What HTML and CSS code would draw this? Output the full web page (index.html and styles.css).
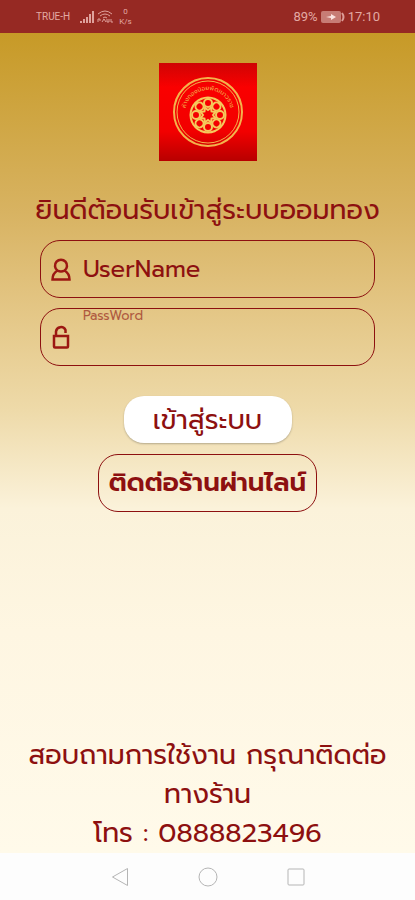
FILE: index.html
```
<!DOCTYPE html>
<html lang="th">
<head>
    <meta charset="UTF-8">
    <meta name="viewport" content="width=device-width, initial-scale=1">
    <title>ระบบออมทอง</title>
    <link rel="stylesheet" href="styles.css">
</head>
<body>

<header class="status-bar">
    <span class="carrier">TRUE-H</span>
    <svg class="signal" width="14" height="12" viewBox="0 0 14 12">
        <path d="M0 10h2v2H0zM3 8h2v4H3zM6 6h2v6H6zM9 3h2v9H9zM12 0h2v12h-2z"/>
    </svg>
    <svg class="wifi" width="16" height="13" viewBox="0 0 16 13">
        <path d="M1 4Q8-2 15 4M3 6Q8 2 13 6M6 8Q8 6 10 8M1 12V9h2v2M5 12l2-3 2 3M10 9v3h2V9M14 9v3h2" fill="none"/>
    </svg>
    <span class="speed">0<br>K/s</span>
    <span class="percent">89%</span>
    <svg class="battery" width="24" height="12" viewBox="0 0 24 12">
        <rect x="0" y="0" width="20" height="12" rx="2" fill="#c77c75"/>
        <path d="M21 2q3 4 0 8" fill="none" stroke="#dc9d98" stroke-width="2"/>
        <path d="M5 6l5-1V3l5 3-5 3V7z" fill="#fbe3e0"/>
    </svg>
    <span class="clock">17:10</span>
</header>

<main class="login">
    <svg class="logo" width="98" height="98" viewBox="0 0 98 98">
        <defs>
            <linearGradient id="red" x1="0" y1="0" x2="0" y2="1">
                <stop offset="0" stop-color="#cf0404"/>
                <stop offset=".25" stop-color="#fa0000"/>
                <stop offset=".7" stop-color="#f20000"/>
                <stop offset="1" stop-color="#b80000"/>
            </linearGradient>
            <path id="arc" d="M26 50a23 23 0 0 1 46 0"/>
            <g id="petal">
                <circle cx="49" cy="40" r="4"/>
                <path d="M42 36Q49 33 56 36M45 44l4 3 4-3"/>
            </g>
        </defs>
        <rect width="98" height="98" fill="url(#red)"/>
        <g fill="none" stroke="#f3b34c">
            <circle cx="49" cy="49" r="34" stroke-width="2"/>
            <circle cx="49" cy="49" r="31" stroke-width="1"/>
        </g>
        <text class="logo-text" text-anchor="middle"><textPath href="#arc" startOffset="50%">ห้างทองน้อยพัฒนาวราช</textPath></text>
        <g fill="none" stroke="#f5c95c" stroke-width="2">
            <use href="#petal"/>
            <use href="#petal" transform="rotate(45 49 52)"/>
            <use href="#petal" transform="rotate(90 49 52)"/>
            <use href="#petal" transform="rotate(135 49 52)"/>
            <use href="#petal" transform="rotate(180 49 52)"/>
            <use href="#petal" transform="rotate(225 49 52)"/>
            <use href="#petal" transform="rotate(270 49 52)"/>
            <use href="#petal" transform="rotate(315 49 52)"/>
        </g>
    </svg>

    <h1 class="welcome">ยินดีต้อนรับเข้าสู่ระบบออมทอง</h1>

    <form class="form">
        <div class="field">
            <svg class="icon" width="20" height="24" viewBox="0 0 20 24">
                <path d="M6.500 13.500a6 6 0 1 1 7 0M1.500 22.500q0-6 5-9 3.500 2 7 0 5 3 5 9z"/>
            </svg>
            <input type="text" id="username" placeholder="UserName" aria-label="UserName">
        </div>
        <div class="field">
            <svg class="icon" width="20" height="24" viewBox="0 0 20 24">
                <path d="M3 11h14v10.500q0 1-1 1H4q-1 0-1-1zM5 11V6.500a5 5 0 0 1 9.500-1.500v3"/>
            </svg>
            <label class="hint" for="password">PassWord</label>
            <input type="password" id="password">
        </div>
        <button class="submit" type="submit">เข้าสู่ระบบ</button>
    </form>
    <a class="line-link" href="#">ติดต่อร้านผ่านไลน์</a>

    <p class="contact">สอบถามการใช้งาน กรุณาติดต่อ<br>ทางร้าน<br>โทร : 0888823496</p>
</main>

<nav class="nav-bar">
    <button type="button" aria-label="Back">
        <svg width="18" height="20" viewBox="0 0 18 20"><path d="M16.500 1.500v17L1.500 10z"/></svg>
    </button>
    <button type="button" aria-label="Home">
        <svg width="20" height="20" viewBox="0 0 20 20"><circle cx="10" cy="10" r="9"/></svg>
    </button>
    <button type="button" aria-label="Recent">
        <svg width="18" height="18" viewBox="0 0 18 18"><rect x="1" y="1" width="16" height="16" rx="1"/></svg>
    </button>
</nav>

</body>
</html>
```
FILE: styles.css
```
* {
    box-sizing: border-box;
}
body {
    margin: 0;
    min-height: 100vh;
    display: flex;
    flex-direction: column;
    font-family: Prompt, Kanit, "Noto Sans Thai", "Open Sans", "Noto Sans", sans-serif;
    color: #8d1010;
}
.status-bar {
    display: flex;
    align-items: center;
    height: 33px;
    padding: 0 35px 0 36px;
    background: #962923;
    color: #e3a9a4;
    font-family: Roboto, sans-serif;
    font-size: 13px;
}
.carrier {
    font-size: 10px;
}
.signal {
    margin-left: 10px;
    fill: #dfa19c;
}
.wifi {
    margin-left: 3px;
    stroke: #dfa19c;
}
.speed {
    margin-left: 6px;
    font-size: 8px;
    line-height: 10px;
    text-align: center;
}
.percent {
    margin-left: auto;
}
.battery {
    margin: 0 3px;
}
.login {
    flex: 1;
    display: flex;
    flex-direction: column;
    align-items: center;
    padding: 30px 16px 0;
    background: linear-gradient(#c79a27, #d8b362 22%, #e3c583 33%, #eedaa9 46%, #fbf2da 58%, #fef6e2 73%, #fffaea);
}
.logo {
    display: block;
}
.logo-text {
    font-size: 6px;
    fill: #f3b34c;
}
.welcome {
    margin: 29px 0 10px;
    font-size: 27px;
    font-weight: 400;
    line-height: 40px;
    white-space: nowrap;
}
.form {
    display: flex;
    flex-direction: column;
    align-items: center;
    gap: 10px;
    width: 100%;
    padding: 0 24px;
}
.field {
    position: relative;
    display: flex;
    align-items: center;
    gap: 12px;
    width: 100%;
    height: 58px;
    padding: 0 10px;
    border: 1px solid #8d1010;
    border-radius: 20px;
}
.icon {
    flex: none;
    fill: none;
    stroke: #9c1712;
    stroke-width: 2.500;
}
.field input {
    flex: 1;
    min-width: 0;
    padding: 0;
    border: 0;
    outline: 0;
    background: none;
    color: inherit;
    font: inherit;
    font-size: 24px;
}
.field input::placeholder {
    color: inherit;
    opacity: 1;
}
.hint {
    position: absolute;
    top: 0;
    left: 42px;
    font-size: 13px;
    line-height: 14px;
    opacity: .6;
}
.submit {
    width: 168px;
    height: 47px;
    margin-top: 20px;
    padding: 0;
    border: 0;
    border-radius: 20px;
    background: #fff;
    box-shadow: 0 1px 2px rgba(0, 0, 0, .25);
    color: inherit;
    font: inherit;
    font-size: 27px;
}
.line-link {
    margin-top: 11px;
    padding: 0 10px;
    border: 1px solid #8d1010;
    border-radius: 20px;
    color: inherit;
    font-size: 26px;
    font-weight: 600;
    line-height: 56px;
    text-decoration: none;
}
.contact {
    margin: auto 0 0;
    font-size: 27px;
    line-height: 39px;
    text-align: center;
}
.nav-bar {
    display: flex;
    justify-content: center;
    gap: 50px;
    height: 47px;
    background: #fdfdfd;
}
.nav-bar button {
    display: flex;
    align-items: center;
    justify-content: center;
    width: 38px;
    padding: 0;
    border: 0;
    background: none;
}
.nav-bar svg {
    fill: none;
    stroke: #b5b5b5;
}
```
